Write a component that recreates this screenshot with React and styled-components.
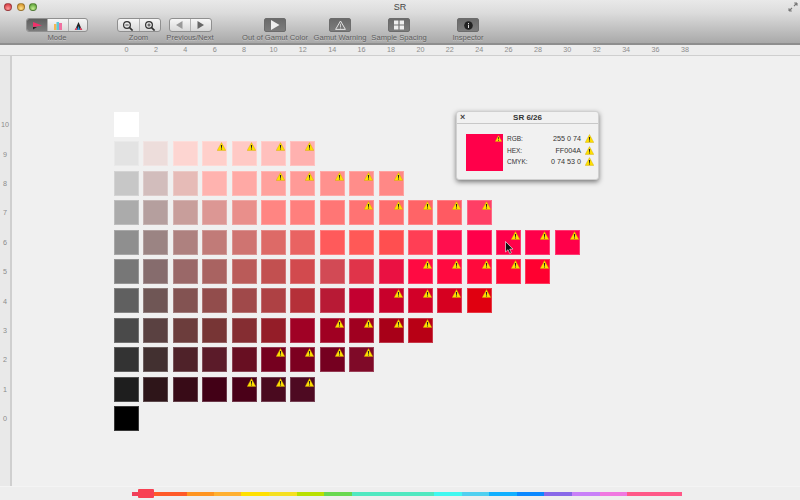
import React from "react"
import styled, { createGlobalStyle } from "styled-components"

const Global = createGlobalStyle`
  html, body { margin: 0; padding: 0; }
  body { width: 800px; height: 500px; overflow: hidden; background: #f0f0f0; font-family: "Liberation Sans", Arial, sans-serif; }
`

const CELL_PITCH = 29.4

// each row: top value first, cell colours from chroma 0 upward, warn = first gamut warning index
const ROWS = [
  { value: 10, colors: ["#ffffff"] },
  { value: 9, warn: 3, colors: ["#e3e3e3", "#eddddb", "#fdd5d1", "#ffcfca", "#ffc9c5", "#ffc0bd", "#ffb1af"] },
  { value: 8, warn: 5, colors: ["#c7c7c7", "#d2bdbc", "#e6bbb7", "#ffb3af", "#ffa9a5", "#ffa19d", "#ff9a97", "#ff918e", "#ff8d8a", "#ff8886"] },
  { value: 7, warn: 8, colors: ["#ababab", "#b59f9e", "#c89e9b", "#dc9794", "#e98f8b", "#ff8582", "#ff7f7d", "#ff7675", "#ff7373", "#ff6d6e", "#ff6467", "#ff5a62", "#ff3f65"] },
  { value: 6, warn: 13, colors: ["#8f8f8f", "#9b8483", "#ae817f", "#c17b78", "#cf7471", "#dd6a67", "#e96362", "#ff5a5b", "#ff5957", "#ff4f50", "#ff3f55", "#ff0f4e", "#ff004a", "#ff004a", "#ff004a", "#ff004a"] },
  { value: 5, warn: 10, colors: ["#777777", "#866c6d", "#9a6868", "#a96361", "#ba5b59", "#c25050", "#d24a4e", "#d24a55", "#e0344a", "#ea1142", "#ff0a42", "#ff0a40", "#ff0a3c", "#ff0535", "#ff0030"] },
  { value: 4, warn: 9, colors: ["#606060", "#6f5655", "#835352", "#924d4c", "#a0494a", "#ae4144", "#b53039", "#b81a35", "#c30030", "#c8002b", "#d20028", "#d60020", "#e00010"] },
  { value: 3, warn: 7, colors: ["#4a4a4a", "#5a4141", "#6c3d3c", "#773535", "#852d32", "#941d28", "#a00125", "#a00022", "#a00020", "#a80018", "#b80015"] },
  { value: 2, warn: 5, colors: ["#333333", "#423030", "#4f2229", "#5b1b29", "#680f22", "#75001f", "#7c0020", "#750020", "#7f0a28"] },
  { value: 1, warn: 4, colors: ["#1e1e1e", "#2e1519", "#380b17", "#420016", "#4a0018", "#4a0a1f", "#4e0a22"] },
  { value: 0, colors: ["#000000"] },
]

const HUES = [
  ["#f0405a", 22], ["#ff5a28", 33], ["#ff9520", 27], ["#ffb030", 27], ["#ffe000", 28], ["#f5e020", 28],
  ["#b8e000", 27], ["#68d850", 28], ["#50e8c0", 82], ["#40f8f0", 28], ["#50d0f0", 27], ["#10b0ff", 28],
  ["#0a88ff", 27], ["#8868e8", 28], ["#c880f8", 28], ["#f078e0", 27], ["#ff5888", 55],
]

const Window = styled.div`
  position: relative;
  width: 800px;
  height: 500px;
  display: flex;
  flex-direction: column;
  overflow: hidden;
`

const Header = styled.header`
  height: 43px;
  flex: none;
  position: relative;
  background: linear-gradient(#e9e9e9, #dcdcdc 30%, #a9a9a9);
  border-bottom: 2px solid #8e8e8e;
  color: #555;
`

const TitleRow = styled.div`
  height: 14px;
  display: flex;
  align-items: center;
  padding-left: 4px;
  gap: 4.7px;
  position: relative;
`

const Light = styled.span`
  width: 8px;
  height: 8px;
  box-sizing: border-box;
  border-radius: 50%;
  background: radial-gradient(circle at 50% 75%, ${(p) => p.$light}, ${(p) => p.$color} 70%);
  border: 0.5px solid rgba(0, 0, 0, 0.3);
`

const Title = styled.div`
  position: absolute;
  left: 0;
  right: 0;
  top: 1px;
  text-align: center;
  font-size: 9px;
  line-height: 12px;
  color: #444;
`

const Resize = styled.svg`
  position: absolute;
  top: 2px;
  right: 2px;
  width: 10px;
  height: 10px;
`

const Toolbar = styled.div`
  display: flex;
  padding-top: 4px;
`

const ToolGroup = styled.div`
  width: ${(p) => p.$width}px;
  margin-left: ${(p) => p.$left}px;
  display: flex;
  flex-direction: column;
  align-items: center;
`

const ToolLabel = styled.div`
  font-size: 7.6px;
  line-height: 10px;
  margin-top: 0.5px;
  white-space: nowrap;
  color: #5e5e5e;
  text-shadow: 0 1px 0 rgba(255, 255, 255, 0.3);
`

const Segmented = styled.div`
  height: 14px;
  box-sizing: border-box;
  display: flex;
  border: 1px solid #8f8f8f;
  border-radius: 3px;
  overflow: hidden;
  background: linear-gradient(#f6f6f6, #d8d8d8);
`

const Segment = styled.div`
  width: ${(p) => p.$width}px;
  display: flex;
  align-items: center;
  justify-content: center;
  background: ${(p) => (p.$on ? "linear-gradient(#5f5f5f, #7d7d7d)" : "transparent")};
  & + & { border-left: 1px solid #b0b0b0; }
`

const BigButton = styled.div`
  width: 22px;
  height: 14px;
  box-sizing: border-box;
  border-radius: 2px;
  border: 1px solid #6c6c6c;
  background: linear-gradient(#6a6a6a, #7c7c7c);
  display: flex;
  align-items: center;
  justify-content: center;
`

const TopRuler = styled.div`
  height: 10px;
  flex: none;
  display: flex;
  padding-left: 111.8px;
  background: #ededed;
  border-bottom: 1px solid #cfcfcf;
`

const TopTick = styled.span`
  width: ${CELL_PITCH}px;
  flex: none;
  text-align: center;
  font-size: 7.2px;
  line-height: 10px;
  color: #8c8c8c;
`

const Body = styled.div`
  flex: 1;
  display: flex;
  min-height: 0;
`

const SideRuler = styled.div`
  width: 10px;
  flex: none;
  background: #e9e9e9;
  border-right: 2px solid #cfcfcf;
  padding-top: 54px;
`

const SideTick = styled.div`
  height: ${CELL_PITCH}px;
  display: flex;
  align-items: center;
  justify-content: center;
  font-size: 7.2px;
  color: #8c8c8c;
`

const Chart = styled.main`
  padding: 56px 0 0 102px;
  display: flex;
  flex-direction: column;
  gap: 4.4px;
`

const SwatchRow = styled.div`
  display: flex;
  gap: 4.4px;
`

const Swatch = styled.div`
  position: relative;
  width: 25px;
  height: 25px;
  flex: none;
  box-sizing: border-box;
  border: 1px solid rgba(255, 255, 255, 0.22);
`

const WarnSpot = styled.span`
  position: absolute;
  top: ${(p) => p.$inset}px;
  right: ${(p) => p.$inset}px;
  display: flex;
`

const Footer = styled.footer`
  height: 13px;
  flex: none;
  position: relative;
  display: flex;
  align-items: center;
  padding-left: 132px;
  background: #eeeeee;
  border-top: 1px solid #f4f4f4;
`

const HueBar = styled.div`
  display: flex;
  height: 4px;
`

const Hue = styled.span`
  display: block;
  height: 4px;
  width: ${(p) => p.$width}px;
  background: ${(p) => p.$color};
`

const Thumb = styled.span`
  position: absolute;
  left: 138px;
  top: 2px;
  width: 16px;
  height: 9px;
  border-radius: 1px;
  background: #f84052;
`

const Panel = styled.aside`
  position: absolute;
  left: 456px;
  top: 111px;
  width: 143px;
  height: 69px;
  box-sizing: border-box;
  background: #f1f1f1;
  border: 1px solid #d0d0d0;
  border-radius: 3px;
  box-shadow: 0 2px 5px rgba(0, 0, 0, 0.5);
`

const PanelHead = styled.div`
  position: relative;
  height: 11px;
  border-bottom: 1px solid #c8c8c8;
  text-align: center;
  font-size: 8px;
  line-height: 11px;
  font-weight: bold;
  color: #333;
`

const PanelClose = styled.span`
  position: absolute;
  left: 3px;
  top: 0;
  font-size: 9px;
  line-height: 10px;
  color: #444;
`

const PanelBody = styled.div`
  display: flex;
  padding: 10px 0 0 8.7px;
`

const PanelSwatch = styled.div`
  position: relative;
  width: 37px;
  height: 37px;
  background: #ff004a;
`

const PanelRows = styled.div`
  margin-left: 4.3px;
  width: 87px;
  display: flex;
  flex-direction: column;
  gap: 1.5px;
  margin-top: -0.5px;
`

const PanelRow = styled.div`
  display: flex;
  align-items: center;
  height: 10px;
  font-size: 7.2px;
  color: #333;
`

const PanelKey = styled.span`
  font-size: 6.5px;
`

const PanelValue = styled.span`
  flex: 1;
  text-align: right;
  margin-right: 4px;
`

const Pointer = styled.svg`
  position: absolute;
  left: 505px;
  top: 241px;
  width: 8px;
  height: 13px;
`

const Warn = ({ size = 9 }) => (
  <svg width={size} height={size} viewBox="0 0 10 10">
    <path d="M5 .6 9.8 9.4H.2Z" fill="#ffe000" stroke="#c8a000" strokeWidth=".4" strokeLinejoin="round" />
    <path d="M4.3 3.2h1.4L5.4 6.6h-.8ZM4.4 7.1h1.2v1.2H4.4Z" fill="#222" />
  </svg>
)

const MacIcon = ({ children, w = 14, h = 10 }) => (
  <svg width={w} height={h} viewBox={`0 0 ${w} ${h}`}>{children}</svg>
)

const Magnifier = ({ plus }) => (
  <MacIcon w={12} h={11}>
    <circle cx="5" cy="5" r="3.4" fill="none" stroke="#333" strokeWidth="1.2" />
    <path d="M3.4 5h3.2" stroke="#333" strokeWidth=".9" />
    {plus && <path d="M5 3.4v3.2" stroke="#333" strokeWidth=".9" />}
    <path d="M7.6 7.6l3 3" stroke="#333" strokeWidth="1.6" />
  </MacIcon>
)

const App = () => {
  const ticks = Array.from({ length: 20 }, (_, i) => i * 2)
  return (
    <Window>
      <Global />
      <Header>
        <TitleRow>
          <Light $color="#dd4a50" $light="#ff9a9a" />
          <Light $color="#dca038" $light="#ffe28a" />
          <Light $color="#6cae44" $light="#c4ee90" />
          <Title>SR</Title>
        </TitleRow>
        <Resize viewBox="0 0 10 10">
          <path d="M1 9l3-3M1 9V6.2M1 9h2.8M9 1L6 4M9 1v2.8M9 1H6.2" stroke="#777" strokeWidth="1.1" fill="none" />
        </Resize>
        <Toolbar>
          <ToolGroup $left={27} $width={60}>
            <Segmented>
              <Segment $on $width={20}>
                <MacIcon w={11} h={10}>
                  <path d="M1 2 10 5.5 1 7Z" fill="#f0306a" />
                  <path d="M1 7h4L1 9.5Z" fill="#222" />
                </MacIcon>
              </Segment>
              <Segment $width={20}>
                <MacIcon w={8} h={9}>
                  <path d="M0 3h2.5v6H0Z" fill="#f4b850" />
                  <path d="M2.5 1h2.5v8H2.5Z" fill="#60c8d8" />
                  <path d="M5 2h3v7H5Z" fill="#f070a0" />
                </MacIcon>
              </Segment>
              <Segment $width={18}>
                <MacIcon w={9} h={9}>
                  <path d="M4.5 1 8 9H1Z" fill="#222" />
                  <path d="M4.5 5 6 9H3Z" fill="#3098d8" />
                  <path d="M.5 9h2.5V6ZM8.5 9H6V6Z" fill="#e04060" />
                </MacIcon>
              </Segment>
            </Segmented>
            <ToolLabel>Mode</ToolLabel>
          </ToolGroup>
          <ToolGroup $left={30} $width={43}>
            <Segmented>
              <Segment $width={21}><Magnifier /></Segment>
              <Segment $width={20}><Magnifier plus /></Segment>
            </Segmented>
            <ToolLabel>Zoom</ToolLabel>
          </ToolGroup>
          <ToolGroup $left={9} $width={42}>
            <Segmented>
              <Segment $width={20}>
                <MacIcon w={7} h={8}><path d="M6.5 0v8L0 4Z" fill="#999" /></MacIcon>
              </Segment>
              <Segment $width={20}>
                <MacIcon w={7} h={8}><path d="M.5 0v8L7 4Z" fill="#666" /></MacIcon>
              </Segment>
            </Segmented>
            <ToolLabel>Previous/Next</ToolLabel>
          </ToolGroup>
          <ToolGroup $left={53} $width={22}>
            <BigButton>
              <MacIcon w={10} h={10}><path d="M1 0 9.5 5 1 10Z" fill="#eee" /></MacIcon>
            </BigButton>
            <ToolLabel>Out of Gamut Color</ToolLabel>
          </ToolGroup>
          <ToolGroup $left={43} $width={22}>
            <BigButton>
              <MacIcon w={11} h={10}>
                <path d="M5.5 1 10.4 9.4H.6Z" fill="none" stroke="#e4e4e4" strokeWidth="1" strokeLinejoin="round" />
                <path d="M5.1 3.8h.8V7h-.8ZM5.1 7.6h.8v.8h-.8Z" fill="#e4e4e4" />
              </MacIcon>
            </BigButton>
            <ToolLabel>Gamut Warning</ToolLabel>
          </ToolGroup>
          <ToolGroup $left={37} $width={22}>
            <BigButton>
              <MacIcon w={10} h={10}>
                <path d="M0 .5h4.4v4H0ZM5.6.5H10v4H5.6ZM0 5.5h4.4v4H0ZM5.6 5.5H10v4H5.6Z" fill="#eee" />
              </MacIcon>
            </BigButton>
            <ToolLabel>Sample Spacing</ToolLabel>
          </ToolGroup>
          <ToolGroup $left={47} $width={22}>
            <BigButton>
              <MacIcon w={9} h={9}>
                <circle cx="4.5" cy="4.5" r="4.3" fill="#222" />
                <path d="M4 3.8h1V7H4ZM4 2h1v1H4Z" fill="#ddd" />
              </MacIcon>
            </BigButton>
            <ToolLabel>Inspector</ToolLabel>
          </ToolGroup>
        </Toolbar>
      </Header>

      <TopRuler>
        {ticks.map((t) => <TopTick key={t}>{t}</TopTick>)}
      </TopRuler>

      <Body>
        <SideRuler>
          {ROWS.map((r) => <SideTick key={r.value}>{r.value}</SideTick>)}
        </SideRuler>
        <Chart>
          {ROWS.map((r) => (
            <SwatchRow key={r.value}>
              {r.colors.map((c, i) => (
                <Swatch key={i} style={{ background: c }}>
                  {r.warn !== undefined && i >= r.warn && <WarnSpot $inset={0}><Warn /></WarnSpot>}
                </Swatch>
              ))}
            </SwatchRow>
          ))}
        </Chart>
      </Body>

      <Footer>
        <HueBar>
          {HUES.map(([c, w], i) => <Hue key={i} $color={c} $width={w} />)}
        </HueBar>
        <Thumb />
      </Footer>

      <Panel>
        <PanelHead>
          <PanelClose>×</PanelClose>
          SR 6/26
        </PanelHead>
        <PanelBody>
          <PanelSwatch>
            <WarnSpot $inset={1}><Warn size={7} /></WarnSpot>
          </PanelSwatch>
          <PanelRows>
            {[["RGB:", "255 0 74"], ["HEX:", "FF004A"], ["CMYK:", "0 74 53 0"]].map(([k, v]) => (
              <PanelRow key={k}>
                <PanelKey>{k}</PanelKey>
                <PanelValue>{v}</PanelValue>
                <Warn />
              </PanelRow>
            ))}
          </PanelRows>
        </PanelBody>
      </Panel>

      <Pointer viewBox="0 0 8 13">
        <path d="M.5.5v10.5l2.5-2.3 1.7 3.8 1.7-.8-1.7-3.6h3.3Z" fill="#111" stroke="#fff" strokeWidth=".6" />
      </Pointer>
    </Window>
  )
}

export default App
